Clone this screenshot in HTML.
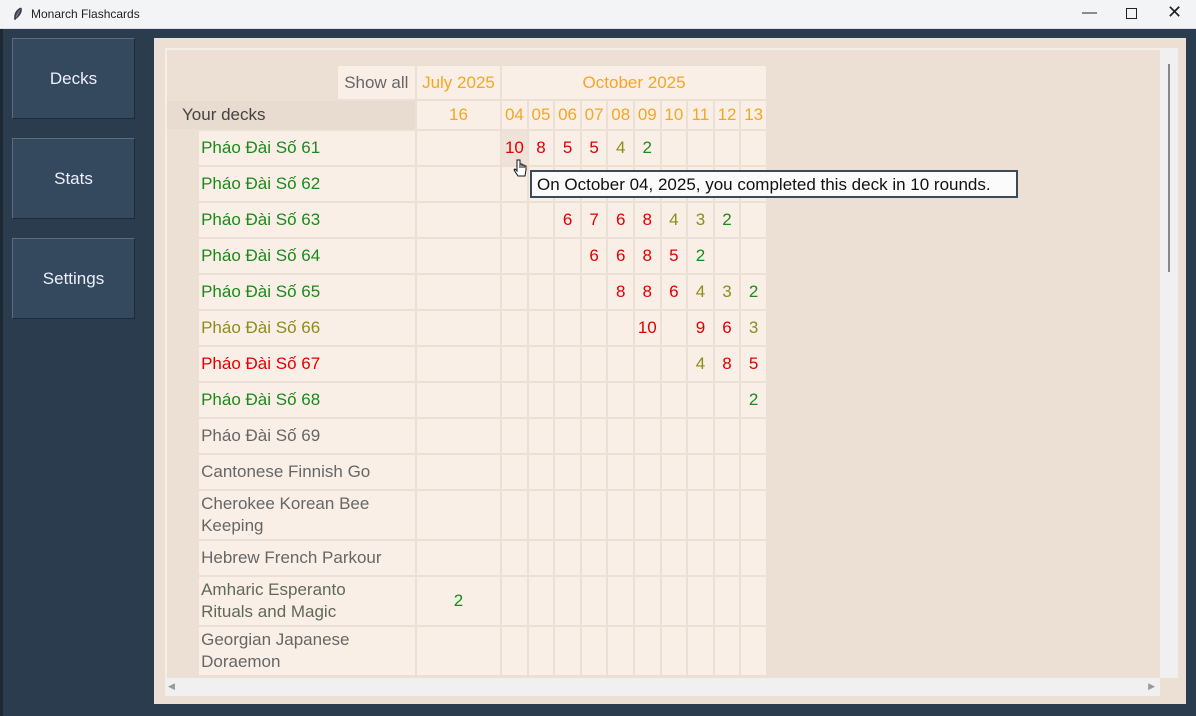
<!DOCTYPE html>
<html><head><meta charset="utf-8"><style>
*{box-sizing:border-box;margin:0;padding:0}
body{width:1196px;height:716px;overflow:hidden;background:#2b3c4f;font-family:"Liberation Sans","DejaVu Sans",sans-serif;position:relative}
#tb{position:absolute;left:0;top:0;width:1196px;height:29px;background:#f3f4f6;border-bottom:1px solid #dde}
#tb .t{position:absolute;left:31px;top:7px;font-size:12px;color:#222}
.btn{position:absolute;left:12px;width:123px;height:81px;background:#34495e;border:1px solid #5a6c7e;border-right-color:#1c2a38;border-bottom-color:#1c2a38;color:#eef;font-size:17px;display:flex;align-items:center;justify-content:center}
#panel{position:absolute;left:154px;top:38px;width:1032px;height:666px;background:#ecdfd3}
#inner{position:absolute;left:11px;top:10px;width:1010px;height:646px;border-left:2px solid #f6efe8;border-top:2px solid #f6efe8;overflow:hidden}
#vs{position:absolute;left:1160px;top:48px;width:18px;height:630px;background:#f0f0f0}
#vs div{position:absolute;left:8px;top:16px;width:2px;height:208px;background:#888}
#hs{position:absolute;left:165px;top:678px;width:995px;height:18px;background:#f0f0f0;font-size:9px;color:#999}
table{position:absolute;left:-3px;top:14px;border-collapse:separate;border-spacing:2px;font-size:17px;table-layout:fixed;width:604px}
td{background:#faefe6;text-align:center;height:34px;padding:0;white-space:nowrap;overflow:visible}
td.i{background:transparent}
td.n{text-align:left;padding-left:2px}
.o{color:#f5a623}.g{color:#1a8a1a}.r{color:#e00000}.y{color:#8c8c1a}.k{color:#666}
td.two{height:48px;line-height:22px}
tr.h2 td{height:28px}
#tip{position:absolute;left:530px;top:170px;width:488px;height:28px;background:#fbfbfb;border:2px solid #3a4a5a;font-size:17px;color:#111;padding:3px 0 0 5px;white-space:nowrap}
</style></head><body>
<div style="position:absolute;left:0;top:29px;width:3px;height:687px;background:#1e2833"></div>
<div id="tb"><svg style="position:absolute;left:12px;top:7px" width="12" height="14"><path d="M9 1 C4 3 2 8 3 13 M9 1 C10 5 7 9 3 12" stroke="#334" fill="#556" stroke-width="1.2"/></svg><span class="t">Monarch Flashcards</span>
<span style="position:absolute;left:1082px;top:4px;font-size:15px;color:#222">—</span>
<span style="position:absolute;left:1126px;top:8px;width:11px;height:11px;border:1.3px solid #222"></span>
<span style="position:absolute;left:1167px;top:2px;font-size:18px;color:#222">✕</span></div>
<div class="btn" style="top:38px">Decks</div>
<div class="btn" style="top:138px">Stats</div>
<div class="btn" style="top:238px">Settings</div>
<div id="panel"><div id="inner">
<table>
<colgroup><col style="width:31px"><col style="width:215px"><col style="width:83px"><col style="width:24.5px"><col style="width:24.5px"><col style="width:24.5px"><col style="width:24.5px"><col style="width:24.5px"><col style="width:24.5px"><col style="width:24.5px"><col style="width:24.5px"><col style="width:24.5px"><col style="width:24.5px"></colgroup>
<tr style="height:33px"><td class="i" style="height:33px"></td><td class="n" style="background:transparent;text-align:right;padding:0;height:33px"><span style="display:inline-block;background:#faefe6;width:77px;height:33px;line-height:33px;text-align:center;color:#666;font-size:17px">Show all</span></td><td class="o" style="height:33px">July 2025</td><td colspan="10" class="o" style="height:33px">October 2025</td></tr>
<tr class="h2"><td colspan="2" style="background:#e8dbcf;text-align:left;padding-left:16px;color:#444">Your decks</td><td class="o">16</td><td class="o">04</td><td class="o">05</td><td class="o">06</td><td class="o">07</td><td class="o">08</td><td class="o">09</td><td class="o">10</td><td class="o">11</td><td class="o">12</td><td class="o">13</td></tr>
<tr><td class="i"></td><td class="n g">Pháo Đài Số 61</td><td></td><td class="r" style="background:#efe3d9">10</td><td class="r">8</td><td class="r">5</td><td class="r">5</td><td class="y">4</td><td class="g">2</td><td></td><td></td><td></td><td></td></tr>
<tr><td class="i"></td><td class="n g">Pháo Đài Số 62</td><td></td><td></td><td></td><td></td><td></td><td></td><td></td><td></td><td></td><td></td><td></td></tr>
<tr><td class="i"></td><td class="n g">Pháo Đài Số 63</td><td></td><td></td><td></td><td class="r">6</td><td class="r">7</td><td class="r">6</td><td class="r">8</td><td class="y">4</td><td class="y">3</td><td class="g">2</td><td></td></tr>
<tr><td class="i"></td><td class="n g">Pháo Đài Số 64</td><td></td><td></td><td></td><td></td><td class="r">6</td><td class="r">6</td><td class="r">8</td><td class="r">5</td><td class="g">2</td><td></td><td></td></tr>
<tr><td class="i"></td><td class="n g">Pháo Đài Số 65</td><td></td><td></td><td></td><td></td><td></td><td class="r">8</td><td class="r">8</td><td class="r">6</td><td class="y">4</td><td class="y">3</td><td class="g">2</td></tr>
<tr><td class="i"></td><td class="n y">Pháo Đài Số 66</td><td></td><td></td><td></td><td></td><td></td><td></td><td class="r">10</td><td></td><td class="r">9</td><td class="r">6</td><td class="y">3</td></tr>
<tr><td class="i"></td><td class="n r">Pháo Đài Số 67</td><td></td><td></td><td></td><td></td><td></td><td></td><td></td><td></td><td class="y">4</td><td class="r">8</td><td class="r">5</td></tr>
<tr><td class="i"></td><td class="n g">Pháo Đài Số 68</td><td></td><td></td><td></td><td></td><td></td><td></td><td></td><td></td><td></td><td></td><td class="g">2</td></tr>
<tr><td class="i"></td><td class="n k">Pháo Đài Số 69</td><td></td><td></td><td></td><td></td><td></td><td></td><td></td><td></td><td></td><td></td><td></td></tr>
<tr><td class="i"></td><td class="n k">Cantonese Finnish Go</td><td></td><td></td><td></td><td></td><td></td><td></td><td></td><td></td><td></td><td></td><td></td></tr>
<tr><td class="i"></td><td class="n k two">Cherokee Korean Bee<br>Keeping</td><td></td><td></td><td></td><td></td><td></td><td></td><td></td><td></td><td></td><td></td><td></td></tr>
<tr><td class="i"></td><td class="n k">Hebrew French Parkour</td><td></td><td></td><td></td><td></td><td></td><td></td><td></td><td></td><td></td><td></td><td></td></tr>
<tr><td class="i"></td><td class="n k two" style="color:#5f6a55">Amharic Esperanto<br>Rituals and Magic</td><td class="g">2</td><td></td><td></td><td></td><td></td><td></td><td></td><td></td><td></td><td></td><td></td></tr>
<tr><td class="i"></td><td class="n k two">Georgian Japanese<br>Doraemon</td><td></td><td></td><td></td><td></td><td></td><td></td><td></td><td></td><td></td><td></td><td></td></tr>
</table>
</div></div>
<div id="vs"><div></div></div>
<div id="hs"><span style="position:absolute;left:3px;top:3px">◀</span><span style="position:absolute;right:5px;top:3px">▶</span></div>
<div id="tip">On October 04, 2025, you completed this deck in 10 rounds.</div>
<svg style="position:absolute;left:512px;top:158px" width="16" height="22"><path d="M5 2 v11 l-2 -2 l-1 1 l4 6 h7 l1 -6 v-4 h-2 v2 v-3 h-2 v3 v-4 h-2 v4 v-8 z" fill="#fff" stroke="#111" stroke-width="1"/></svg>
</body></html>
